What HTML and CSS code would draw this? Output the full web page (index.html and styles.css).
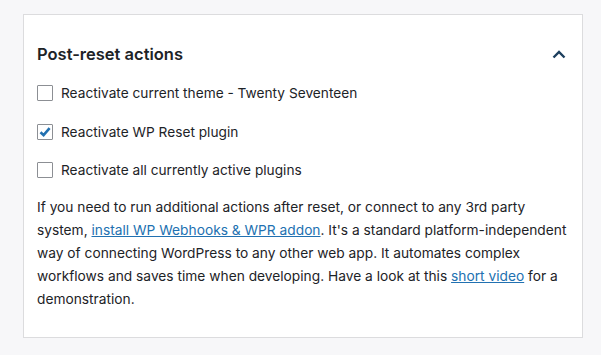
FILE: index.html
```html
<!DOCTYPE html>
<html>
<head>
<meta charset="utf-8">
<link rel="stylesheet" href="styles.css">
</head>
<body>
<div class="card">
  <div class="card-header">
    <h2 class="card-title">Post-reset actions</h2>
    <button class="toggle" aria-label="Collapse">
      <svg width="14" height="9" viewBox="0 0 14 9"><path d="M1.5 7.5 L7 2 L12.5 7.5" fill="none" stroke="#1d3f5e" stroke-width="2.4"/></svg>
    </button>
  </div>
  <div class="card-body">
    <label class="option"><span class="box"></span>Reactivate current theme - Twenty Seventeen</label>
    <label class="option"><span class="box checked"><svg width="14" height="14" viewBox="0 0 14 14"><path d="M2.5 7.2 L5.6 10.2 L11.6 3.2" fill="none" stroke="#2271b1" stroke-width="2.6"/></svg></span>Reactivate WP Reset plugin</label>
    <label class="option"><span class="box"></span>Reactivate all currently active plugins</label>
    <p class="desc">If you need to run additional actions after reset, or connect to any 3rd party system, <a href="#">install WP Webhooks &amp; WPR addon</a>. It's a standard platform-independent way of connecting WordPress to any other web app. It automates complex workflows and saves time when developing. Have a look at this <a href="#">short video</a> for a demonstration.</p>
  </div>
</div>
</body>
</html>
```
FILE: styles.css
```css
html, body {
  margin: 0;
  padding: 0;
}
body {
  background: #f7f7f9;
  font-family: Inter, "Liberation Sans", sans-serif;
  color: #1d2327;
  width: 601px;
  height: 355px;
  overflow: hidden;
}
.card {
  margin: 14px 0 0 23px;
  width: 558px;
  height: 322px;
  background: #fff;
  border: 1px solid #dcdcde;
}
.card-header {
  display: flex;
  align-items: center;
  justify-content: space-between;
  padding: 27px 15px 0 13px;
  height: 24px;
}
.card-title {
  margin: 0;
  font-size: 16.5px;
  font-weight: 600;
  line-height: 24px;
  color: #1d2327;
}
.toggle {
  border: 0;
  background: transparent;
  padding: 0;
  width: 16px;
  height: 16px;
  display: flex;
  align-items: center;
  justify-content: center;
}
.card-body {
  padding: 17px 13px 0 13px;
}
.option {
  display: flex;
  align-items: center;
  height: 20px;
  margin-bottom: 18.5px;
  font-size: 13.7px;
  color: #1d2327;
}
.box {
  width: 14px;
  height: 14px;
  border: 1px solid #8c8f94;
  border-radius: 1px;
  margin-right: 8px;
  display: flex;
  align-items: center;
  justify-content: center;
  background: #fff;
}
.desc {
  margin: 0;
  margin-top: -3px;
  font-size: 13.75px;
  line-height: 23px;
  color: #1d2327;
}
.desc a {
  color: #2271b1;
  text-decoration: underline;
}
```
